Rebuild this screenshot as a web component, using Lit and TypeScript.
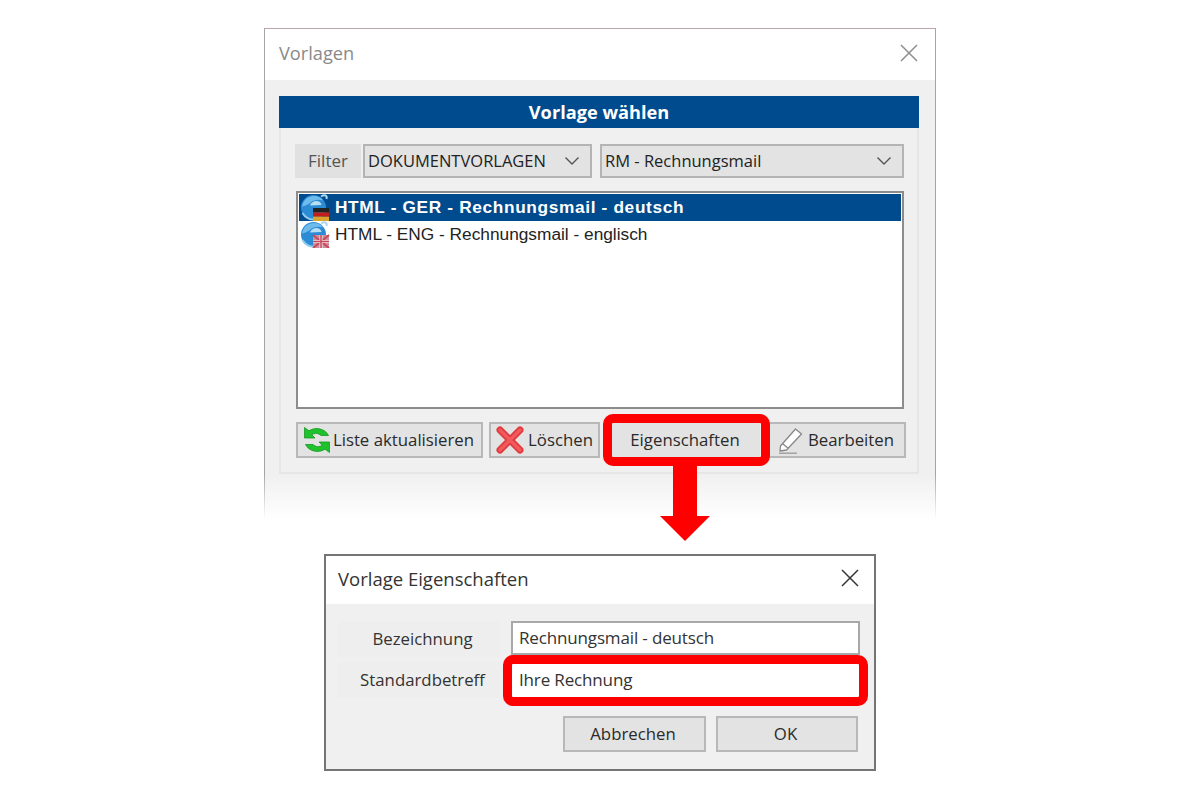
import { LitElement, html, css, svg } from "lit";
import { customElement } from "lit/decorators.js";

const chevron = html`<svg class="chev" width="16" height="10" viewBox="0 0 16 10"><path d="M1.5 1.5 L8 8 L14.5 1.5" fill="none" stroke="#555" stroke-width="1.4"/></svg>`;

const closeX = (c: string, s: number) => html`<svg width="${s}" height="${s}" viewBox="0 0 18 18"><path d="M1 1 L17 17 M17 1 L1 17" fill="none" stroke="${c}" stroke-width="1.5"/></svg>`;

const globe = (flag: unknown) => html`<svg class="globe" width="30" height="28" viewBox="0 0 30 28">
  <path d="M21 3.500c3.500-2 6.500-1.500 5.500 2.500" fill="none" stroke="#a9d6f0" stroke-width="2"/>
  <circle cx="13.500" cy="14.500" r="12.500" fill="#2b8bd4"/>
  <path d="M2 13.500c1.500-7 6-10.500 12-10.500 4 0 7.500 1.500 9 4.500-5-1.500-9.500-.5-12.500 2-2.500 2-5.500 3.500-8.500 4z" fill="#6fbcec"/>
  <path d="M10 12.500c1-3 3.500-4.500 6.500-4.500 2.500 0 4.500 1.500 5 4z" fill="#b6def5"/>
  <path d="M2.500 20c2.500 4.500 7.500 7 11.500 6.500" fill="none" stroke="#8ccaef" stroke-width="2"/>
  ${flag}
</svg>`;

const flagDe = svg`<rect x="13" y="15" width="16" height="4.400" fill="#222"/><rect x="13" y="19.400" width="16" height="4.300" fill="#c01f1b"/><rect x="13" y="23.700" width="16" height="4.300" fill="#d9a52c"/>`;
const flagUk = svg`<rect x="13" y="15" width="16" height="13" fill="#cf8f9e"/><path d="M13 15 L29 28 M29 15 L13 28" stroke="#c8485a" stroke-width="2"/><path d="M21 15 V28 M13 21.500 H29" stroke="#f0dfe4" stroke-width="3"/><path d="M21 15 V28 M13 21.500 H29" stroke="#c8485a" stroke-width="1.500"/>`;

const refresh = html`<svg width="28" height="28" viewBox="0 0 28 28">
  <path d="M1.500 1.500 V12 H12 L8.800 8.800 C11.500 6.800 15.500 7 18 9.500 L25.500 9.500 C22 2.500 12.500 .5 6 4.800 Z" fill="#1fc22d" stroke="#17991f" stroke-width=".8"/>
  <path d="M26.500 26.500 V16 H16 L19.200 19.200 C16.500 21.200 12.500 21 10 18.500 L2.500 18.500 C6 25.500 15.500 27.500 22 23.200 Z" fill="#1fc22d" stroke="#17991f" stroke-width=".8"/>
</svg>`;

const redX = html`<svg width="28" height="28" viewBox="0 0 28 28"><path d="M4 4 L24 24 M24 4 L4 24" stroke="#e03a3e" stroke-width="7" stroke-linecap="round"/><path d="M4 4 L24 24 M24 4 L4 24" stroke="#f2595c" stroke-width="3.500" stroke-linecap="round"/></svg>`;

const pencil = html`<svg width="26" height="28" viewBox="0 0 26 28"><path d="M2.500 20 L17.500 3 L23.500 8 L8.500 24 L2 25 Z M5 18 L10.500 22.500" fill="#fff" stroke="#888" stroke-width="1.300" stroke-linejoin="round"/><path d="M1 27.200 H19" stroke="#999" stroke-width="1.300"/></svg>`;

@customElement("app-root")
export class AppRoot extends LitElement {
  static styles = css`
    :host { display: block; position: relative; width: 1200px; height: 800px; background: #fff; overflow: hidden; font-family: "Open Sans", "Noto Sans", sans-serif; color: #222; }
    .win { position: absolute; box-sizing: border-box; display: flex; flex-direction: column; background: #f0f0f0; }
    .w1 { left: 264px; top: 28px; width: 672px; height: 492px; border: 1px solid #a5a5a5; border-top-color: #b9a6aa; border-bottom: none; }
    .w2 { left: 324px; top: 554px; width: 552px; height: 217px; border: 2px solid #757575; }
    .title { box-sizing: border-box; flex: none; background: #fff; display: flex; align-items: center; justify-content: space-between; }
    .w1 .title { height: 51px; padding: 0 17px 3px 14px; font-size: 18.200px; color: #8a8a8a; }
    .w2 .title { height: 48px; padding: 0 15px 4px 12px; font-size: 18.500px; color: #333; }
    .body1 { flex: 1; padding: 16px 16px 0 14px; }
    .panel { box-sizing: border-box; height: 378px; border: 2px solid #e6e6e6; border-top: none; }
    .banner { height: 32px; margin: 0 -2px; background: #004b8d; color: #fff; font-weight: 700; font-size: 18.200px; display: flex; align-items: center; justify-content: center; padding-bottom: 1px; box-sizing: border-box; }
    .filters { display: flex; align-items: stretch; height: 34px; margin: 16px 14px 0 14px; }
    .flabel { width: 66px; background: #e1e1e1; color: #555; font-size: 17px; display: flex; align-items: center; justify-content: center; flex: none; padding-bottom: 2px; box-sizing: border-box; }
    .select { box-sizing: border-box; display: flex; align-items: center; justify-content: space-between; background: #e3e3e3; border: 2px solid #b4b4b4; font-size: 16.500px; color: #222; padding: 0 10px 0 3px; flex: none; }
    .select span { margin-bottom: 2px; }
    .s1 { width: 229px; margin-left: 2px; }
    .s2 { width: 304px; margin-left: 8px; }
    .list { box-sizing: border-box; height: 218px; margin: 13px 13px 0 15px; border: 2px solid #8c8c8c; background: #fff; padding: 1px; font-family: "Liberation Sans", Arial, sans-serif; font-size: 17.300px; }
    .row { height: 26.500px; display: flex; align-items: center; gap: 5px; padding-left: 1px; color: #222; }
    .row span { margin-top: 2px; }
    .row.sel { background: #004b8d; color: #fff; font-weight: 700; letter-spacing: .64px; }
    .row.sel span { margin-top: 0; }
    .globe { flex: none; }
    .btns { display: flex; margin: 13px 0 0 15px; height: 36px; }
    .btn { box-sizing: border-box; display: flex; align-items: center; justify-content: center; gap: 4px; background: #e3e3e3; border: 2px solid #b8b8b8; font-size: 16.800px; color: #2a2a2a; height: 36px; flex: none; padding-bottom: 2px; }
    .btn svg { margin-top: 2px; }
    .b-list { width: 187px; gap: 2px; padding-right: 2px; }
    .b-del { width: 111px; margin-left: 6px; }
    .b-prop { width: 148px; margin-left: 12px; border-color: #e3e3e3; padding-right: 2px; }
    .b-edit { width: 138px; margin-left: 8px; padding-right: 2px; }
    .fade { position: absolute; left: 264px; top: 474px; width: 672px; height: 47px; background: linear-gradient(to bottom, rgba(255,255,255,0), #fff 96%); }
    .mark { position: absolute; box-sizing: border-box; border: 9.500px solid #fe0000; border-radius: 10px; }
    .m1 { left: 603px; top: 414px; width: 167px; height: 52px; }
    .m2 { left: 503px; top: 655px; width: 365px; height: 51px; }
    .arrow { position: absolute; left: 660px; top: 466px; }
    .body2 { flex: 1; padding: 17px 14px 0 12px; display: flex; flex-direction: column; }
    .form { display: grid; grid-template-columns: 162px 1fr; row-gap: 5px; column-gap: 11px; }
    .lbl { box-sizing: border-box; background: #eeeeee; height: 36px; display: flex; align-items: center; justify-content: center; font-size: 16.800px; color: #333; padding: 0 0 1px 7px; }
    .field { box-sizing: border-box; height: 34px; background: #fff; border: 2px solid #a8a8a8; display: flex; align-items: center; padding: 0 0 1px 6px; font-size: 17px; color: #333; letter-spacing: -.15px; }
    .field.bare { border-color: #fff; height: 36px; }
    .actions { display: flex; justify-content: flex-end; gap: 10px; margin: 18px 2px 0 0; }
    .actions .btn { width: 143px; padding-right: 3px; }
    .actions .btn.ok { width: 142px; }
  `;

  render() {
    return html`
      <div class="win w1">
        <div class="title"><span>Vorlagen</span>${closeX("#8d8d8d", 18)}</div>
        <div class="body1">
          <div class="panel">
            <div class="banner">Vorlage wählen</div>
            <div class="filters">
              <div class="flabel">Filter</div>
              <div class="select s1"><span>DOKUMENTVORLAGEN</span>${chevron}</div>
              <div class="select s2"><span>RM - Rechnungsmail</span>${chevron}</div>
            </div>
            <div class="list">
              <div class="row sel">${globe(flagDe)}<span>HTML - GER - Rechnungsmail - deutsch</span></div>
              <div class="row">${globe(flagUk)}<span>HTML - ENG - Rechnungsmail - englisch</span></div>
            </div>
            <div class="btns">
              <div class="btn b-list">${refresh}<span>Liste aktualisieren</span></div>
              <div class="btn b-del">${redX}<span>Löschen</span></div>
              <div class="btn b-prop">Eigenschaften</div>
              <div class="btn b-edit">${pencil}<span>Bearbeiten</span></div>
            </div>
          </div>
        </div>
      </div>
      <div class="fade"></div>
      <svg class="arrow" width="50" height="76" viewBox="0 0 50 76"><path d="M13 0 H37 V50 H50 L25 75 L0 50 H13 Z" fill="#fe0000"/></svg>
      <div class="mark m1"></div>

      <div class="win w2">
        <div class="title"><span>Vorlage Eigenschaften</span>${closeX("#333", 18)}</div>
        <div class="body2">
          <div class="form">
            <div class="lbl">Bezeichnung</div>
            <div class="field">Rechnungsmail - deutsch</div>
            <div class="lbl">Standardbetreff</div>
            <div class="field bare">Ihre Rechnung</div>
          </div>
          <div class="actions">
            <div class="btn">Abbrechen</div>
            <div class="btn ok">OK</div>
          </div>
        </div>
      </div>
      <div class="mark m2"></div>
    `;
  }
}
